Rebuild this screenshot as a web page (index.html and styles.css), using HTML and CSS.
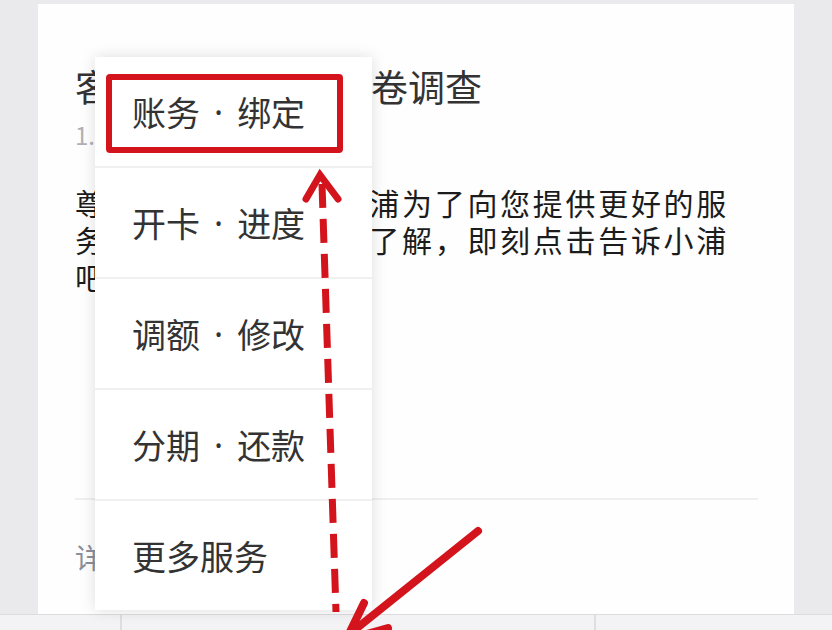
FILE: index.html
```html
<!DOCTYPE html>
<html lang="zh-CN">
<head>
<meta charset="utf-8">
<title>客户服务满意度问卷调查</title>
<link rel="stylesheet" href="styles.css">
</head>
<body>
<div class="page">
  <div class="main">
    <article class="card">
      <h1 class="title">客户服务满意度问卷调查</h1>
      <div class="meta">1.12</div>
      <p class="body">尊敬的客户您好，小浦为了向您提供更好的服务质量，希望进一步了解，即刻点击告诉小浦吧！</p>
      <div class="footer">详情</div>
    </article>
  </div>
  <div class="tabbar">
    <div class="tab"></div>
    <div class="tab"></div>
    <div class="tab"></div>
  </div>

  <ul class="menu">
    <li class="item">账务<span class="dot">·</span>绑定</li>
    <li class="item">开卡<span class="dot">·</span>进度</li>
    <li class="item">调额<span class="dot">·</span>修改</li>
    <li class="item">分期<span class="dot">·</span>还款</li>
    <li class="item">更多服务</li>
  </ul>

  <div class="redbox"></div>

  <svg class="annot" width="832" height="630" viewBox="0 0 832 630">
    <line x1="322" y1="184" x2="336" y2="612" stroke="#d4141c" stroke-width="7" stroke-dasharray="24 11"/>
    <polyline points="306,199 320,175 338,199" fill="none" stroke="#d4141c" stroke-width="7" stroke-linecap="round" stroke-linejoin="miter"/>
    <line x1="478" y1="531" x2="352" y2="632" stroke="#d4141c" stroke-width="8" stroke-linecap="round"/>
    <polyline points="364,603 346,640 388,628" fill="none" stroke="#d4141c" stroke-width="8" stroke-linecap="round"/>
  </svg>
</div>
</body>
</html>
```

FILE: styles.css
```css
* { box-sizing: border-box; }
html, body { margin: 0; padding: 0; }
body {
  width: 832px;
  height: 630px;
  overflow: hidden;
  background: #eaeaed;
  font-family: "Noto Sans CJK SC", "Noto Sans", sans-serif;
}
.page {
  position: relative;
  width: 832px;
  height: 630px;
  display: flex;
  flex-direction: column;
}
.main {
  height: 614px;
  padding: 4px 0 0 38px;
}
.card {
  width: 756px;
  height: 610px;
  background: #fefefe;
  padding: 60px 36px 0 37px;
  display: flex;
  flex-direction: column;
}
.title {
  margin: 0;
  font-size: 37px;
  line-height: 44px;
  font-weight: 400;
  color: #333;
  white-space: nowrap;
}
.meta {
  margin-top: 12px;
  font-size: 24px;
  line-height: 30px;
  color: #b0b0b4;
}
.body {
  margin: 34px 0 0;
  padding-right: 20px;
  flex: 1;
  font-size: 30px;
  line-height: 37px;
  letter-spacing: 2.7px;
  color: #1c1c1c;
}
.footer {
  height: 116px;
  border-top: 2px solid #efeff1;
  display: flex;
  align-items: center;
  font-size: 28px;
  color: #8a8f99;
}
.tabbar {
  flex: 1;
  display: grid;
  grid-template-columns: 120px 474px 1fr;
  background: #f3f3f5;
  border-top: 1px solid #dcdcdf;
}
.tab + .tab { border-left: 2px solid #dedee2; }

.menu {
  position: absolute;
  left: 95px;
  top: 57px;
  width: 277px;
  margin: 0;
  padding: 0;
  list-style: none;
  background: #fff;
  box-shadow: 0 0 14px rgba(0, 0, 0, 0.13);
}
.item {
  height: 111px;
  display: flex;
  align-items: center;
  padding-left: 37px;
  font-size: 34px;
  color: #333;
  border-top: 2px solid #f0f0f2;
}
.item:first-child { border-top: 0; height: 109px; }
.dot {
  font-family: "Noto Sans", sans-serif;
  margin: 0 14px;
}

.redbox {
  position: absolute;
  left: 106px;
  top: 74px;
  width: 237px;
  height: 79px;
  border: 6px solid #d4141c;
  border-radius: 4px;
}
.annot {
  position: absolute;
  left: 0;
  top: 0;
  pointer-events: none;
}
```
